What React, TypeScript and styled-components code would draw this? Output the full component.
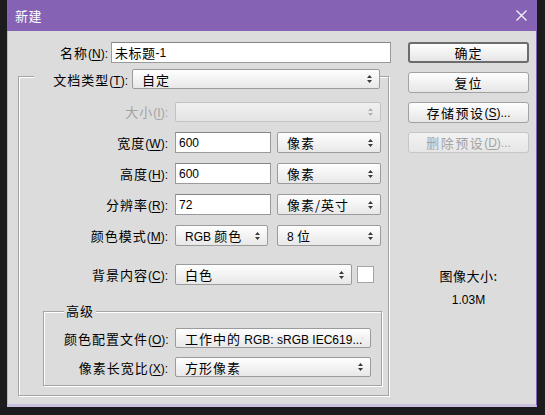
import React from "react";
import styled, { createGlobalStyle, css } from "styled-components";

const Global = createGlobalStyle`
  html, body { margin: 0; padding: 0; background: #1c1c1e; }
  body {
    width: 545px; height: 415px; overflow: hidden;
    font-family: "Liberation Sans", "Noto Sans CJK SC", sans-serif;
    font-size: 12px; color: #000;
  }
  * { box-sizing: border-box; }
`;

const Screen = styled.div`
  width: 545px;
  height: 415px;
  padding-left: 7px;
`;

const Window = styled.div`
  width: 530px;
  display: flex;
  flex-direction: column;
`;

const TitleBar = styled.div`
  height: 31px;
  background: #8562b4;
  display: flex;
  align-items: center;
  justify-content: space-between;
  padding: 0 10px 0 8px;
  color: #fff;
`;

const TitleText = styled.span`
  font-family: "Noto Sans CJK SC", sans-serif;
  font-size: 13px;
  letter-spacing: 0.5px;
`;

const Body = styled.div`
  height: 376px;
  background: #dcdcdc;
  border-left: 1px solid #bfb2d8;
  border-right: 1px solid #8562b4;
  border-bottom: 3px solid #c9bfdf;
  padding: 11px 0 0 10px;
  display: flex;
  gap: 16px;
`;

const LeftCol = styled.div`
  width: 374px;
  display: flex;
  flex-direction: column;
`;

const RightCol = styled.div`
  width: 121px;
  display: flex;
  flex-direction: column;
  gap: 9px;
`;

const C = styled.span<{ $ls?: number }>`
  font-family: "Noto Sans CJK SC", sans-serif;
  font-size: 13px;
  letter-spacing: ${(p) => p.$ls ?? 1}px;
`;

const Label = styled.div<{ $w: number; $disabled?: boolean }>`
  width: ${(p) => p.$w}px;
  flex: none;
  text-align: right;
  white-space: nowrap;
  color: ${(p) => (p.$disabled ? "#a3a3a3" : "#000")};
  u { text-underline-offset: 2px; }
`;

const Row = styled.div<{ $h?: number; $gap?: number }>`
  display: flex;
  align-items: center;
  height: ${(p) => p.$h ?? 21}px;
  gap: ${(p) => p.$gap ?? 7}px;
`;

const Controls = styled.div<{ $gap?: number }>`
  display: flex;
  align-items: center;
  gap: ${(p) => p.$gap ?? 6}px;
`;

const Input = styled.div<{ $w: number }>`
  width: ${(p) => p.$w}px;
  height: 21px;
  background: #fff;
  border: 1px solid #9a9a9a;
  border-top-color: #858585;
  display: flex;
  align-items: center;
  padding-left: 3px;
  white-space: nowrap;
`;

const SelectBox = styled.div<{ $w: number; $h?: number; $disabled?: boolean }>`
  width: ${(p) => p.$w}px;
  height: ${(p) => p.$h ?? 21}px;
  flex: none;
  border: 1px solid #9b9b9b;
  border-radius: 2px;
  background: linear-gradient(#fefefe, #e8e8e8);
  display: flex;
  align-items: center;
  justify-content: space-between;
  padding: 0 7px 0 9px;
  white-space: nowrap;
  overflow: hidden;
  ${(p) =>
    p.$disabled &&
    css`
      border-color: #c3c3c3;
      background: linear-gradient(#f0f0f0, #e4e4e4);
      color: #a3a3a3;
    `}
`;

const Arrow = ({ color = "#3a3a3a" }: { color?: string }) => (
  <svg width="5" height="8" viewBox="0 0 5 8">
    <path d="M2.5 0 L5 3 L0 3 Z M0 5 L5 5 L2.5 8 Z" fill={color} />
  </svg>
);

const Select = ({
  w,
  h,
  disabled,
  children,
}: {
  w: number;
  h?: number;
  disabled?: boolean;
  children?: React.ReactNode;
}) => (
  <SelectBox $w={w} $h={h} $disabled={disabled}>
    <span>{children}</span>
    <Arrow color={disabled ? "#b0b0b0" : "#3a3a3a"} />
  </SelectBox>
);

const Group = styled.fieldset<{ $w: number }>`
  margin: 0;
  min-width: 0;
  width: ${(p) => p.$w}px;
  border: 1px solid #a4a4a4;
  box-shadow: inset 1px 1px 0 #fff, 1px 1px 0 #fff;
`;

const OuterGroup = styled(Group)`
  padding: 12px 6px 9px 15px;
`;

const InnerGroup = styled(Group)`
  margin: 17px 0 0 9px;
  padding: 7px 6px 8px 20px;
`;

const OuterLegend = styled.legend`
  padding: 6px 0 0 0;
  background: #dcdcdc;
  display: flex;
  align-items: center;
  gap: 4px;
`;

const InnerLegend = styled.legend`
  padding: 0 2px;
  line-height: 18px;
  background: #dcdcdc;
`;

const Stack = styled.div<{ $gap: number }>`
  display: flex;
  flex-direction: column;
  gap: ${(p) => p.$gap}px;
`;

const BgRow = styled(Row)`
  margin-top: 18px;
`;

const Swatch = styled.div`
  width: 17px;
  height: 17px;
  background: #fff;
  border: 1px solid #a5a5a5;
`;

const Button = styled.div<{ $primary?: boolean; $disabled?: boolean }>`
  height: 21px;
  border: 1px solid #a2a2a2;
  border-radius: 3px;
  background: linear-gradient(#fefefe, #e6e6e6);
  display: flex;
  align-items: center;
  justify-content: center;
  white-space: nowrap;
  u { text-underline-offset: 2px; }
  ${(p) =>
    p.$primary &&
    css`
      border: 2px solid #6c6c6c;
    `}
  ${(p) =>
    p.$disabled &&
    css`
      border-color: #c6c6c6;
      color: #a3a3a3;
      background: linear-gradient(#f2f2f2, #e6e6e6);
    `}
`;

const SizeInfo = styled.div`
  margin-top: 106px;
  display: flex;
  flex-direction: column;
  align-items: center;
  gap: 8px;
  line-height: 16px;
`;

const Mn = ({ k }: { k: string }) => (
  <>
    (<u>{k}</u>):
  </>
);

export default function App() {
  return (
    <>
      <Global />
      <Screen>
        <Window>
          <TitleBar>
            <TitleText>新建</TitleText>
            <svg width="11" height="11" viewBox="0 0 11 11">
              <path d="M0.5 0.5 L10.5 10.5 M10.5 0.5 L0.5 10.5" stroke="#f4f0fb" strokeWidth="1.4" />
            </svg>
          </TitleBar>
          <Body>
            <LeftCol>
              <Row $gap={3}>
                <Label $w={90}>
                  <C>名称</C>
                  <Mn k="N" />
                </Label>
                <Input $w={280}>
                  <C $ls={0.5}>未标题</C>-1
                </Input>
              </Row>
              <OuterGroup $w={371}>
                <OuterLegend>
                  <Label $w={94}>
                    <C>文档类型</C>
                    <Mn k="T" />
                  </Label>
                  <Select w={248} h={20}>
                    <C>自定</C>
                  </Select>
                </OuterLegend>
                <Stack $gap={10}>
                  <Row>
                    <Label $w={134} $disabled>
                      <C>大小</C>
                      <Mn k="I" />
                    </Label>
                    <Select w={206} h={20} disabled />
                  </Row>
                  <Row>
                    <Label $w={134}>
                      <C>宽度</C>
                      <Mn k="W" />
                    </Label>
                    <Controls>
                      <Input $w={96}>600</Input>
                      <Select w={104}>
                        <C>像素</C>
                      </Select>
                    </Controls>
                  </Row>
                  <Row>
                    <Label $w={134}>
                      <C>高度</C>
                      <Mn k="H" />
                    </Label>
                    <Controls>
                      <Input $w={96}>600</Input>
                      <Select w={104}>
                        <C>像素</C>
                      </Select>
                    </Controls>
                  </Row>
                  <Row>
                    <Label $w={134}>
                      <C>分辨率</C>
                      <Mn k="R" />
                    </Label>
                    <Controls>
                      <Input $w={96}>72</Input>
                      <Select w={104}>
                        <C>像素/英寸</C>
                      </Select>
                    </Controls>
                  </Row>
                  <Row>
                    <Label $w={134}>
                      <C>颜色模式</C>
                      <Mn k="M" />
                    </Label>
                    <Controls $gap={9}>
                      <Select w={93}>
                        RGB <C>颜色</C>
                      </Select>
                      <Select w={104}>
                        8 <C>位</C>
                      </Select>
                    </Controls>
                  </Row>
                </Stack>
                <BgRow>
                  <Label $w={134}>
                    <C>背景内容</C>
                    <Mn k="C" />
                  </Label>
                  <Controls $gap={5}>
                    <Select w={177}>
                      <C>白色</C>
                    </Select>
                    <Swatch />
                  </Controls>
                </BgRow>
                <InnerGroup $w={339}>
                  <InnerLegend>
                    <C>高级</C>
                  </InnerLegend>
                  <Stack $gap={9}>
                    <Row $h={20}>
                      <Label $w={104}>
                        <C>颜色配置文件</C>
                        <Mn k="O" />
                      </Label>
                      <Select w={196} h={20}>
                        <C>工作中的</C> RGB: sRGB IEC619...
                      </Select>
                    </Row>
                    <Row $h={20}>
                      <Label $w={104}>
                        <C>像素长宽比</C>
                        <Mn k="X" />
                      </Label>
                      <Select w={196} h={20}>
                        <C>方形像素</C>
                      </Select>
                    </Row>
                  </Stack>
                </InnerGroup>
              </OuterGroup>
            </LeftCol>
            <RightCol>
              <Button $primary>
                <C>确定</C>
              </Button>
              <Button>
                <C>复位</C>
              </Button>
              <Button>
                <C $ls={1.5}>存储预设</C>
                (<u>S</u>)...
              </Button>
              <Button $disabled>
                <C $ls={1.5}>删除预设</C>
                (<u>D</u>)...
              </Button>
              <SizeInfo>
                <C $ls={0.5}>图像大小:</C>
                <span>1.03M</span>
              </SizeInfo>
            </RightCol>
          </Body>
        </Window>
      </Screen>
    </>
  );
}
